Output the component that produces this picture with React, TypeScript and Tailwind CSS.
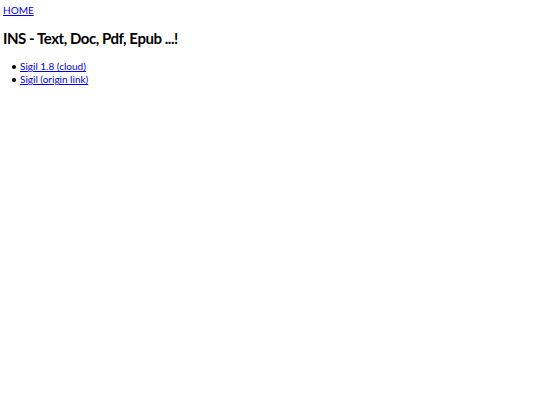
export default function App() {
  return (
    <div className="min-h-[405px] bg-white px-[3px] pt-[4px] font-['Lato','Liberation_Sans',sans-serif] text-[10px] leading-[13px] text-black">
      <a href="#" className="text-[#0000ee] underline">
        HOME
      </a>
      <h1 className="mt-[11px] text-[15px] leading-[20px] font-bold tracking-[-0.45px]">
        INS - Text, Doc, Pdf, Epub ...!
      </h1>
      <ul className="mt-[12px] pl-[17px]">
        {["Sigil 1.8 (cloud)", "Sigil (origin link)"].map((t) => (
          <li key={t} className="relative">
            <span className="absolute top-[5px] -left-[8px] size-[4px] rounded-full bg-black" />
            <a href="#" className="text-[#0000ee] underline">
              {t}
            </a>
          </li>
        ))}
      </ul>
    </div>
  );
}
